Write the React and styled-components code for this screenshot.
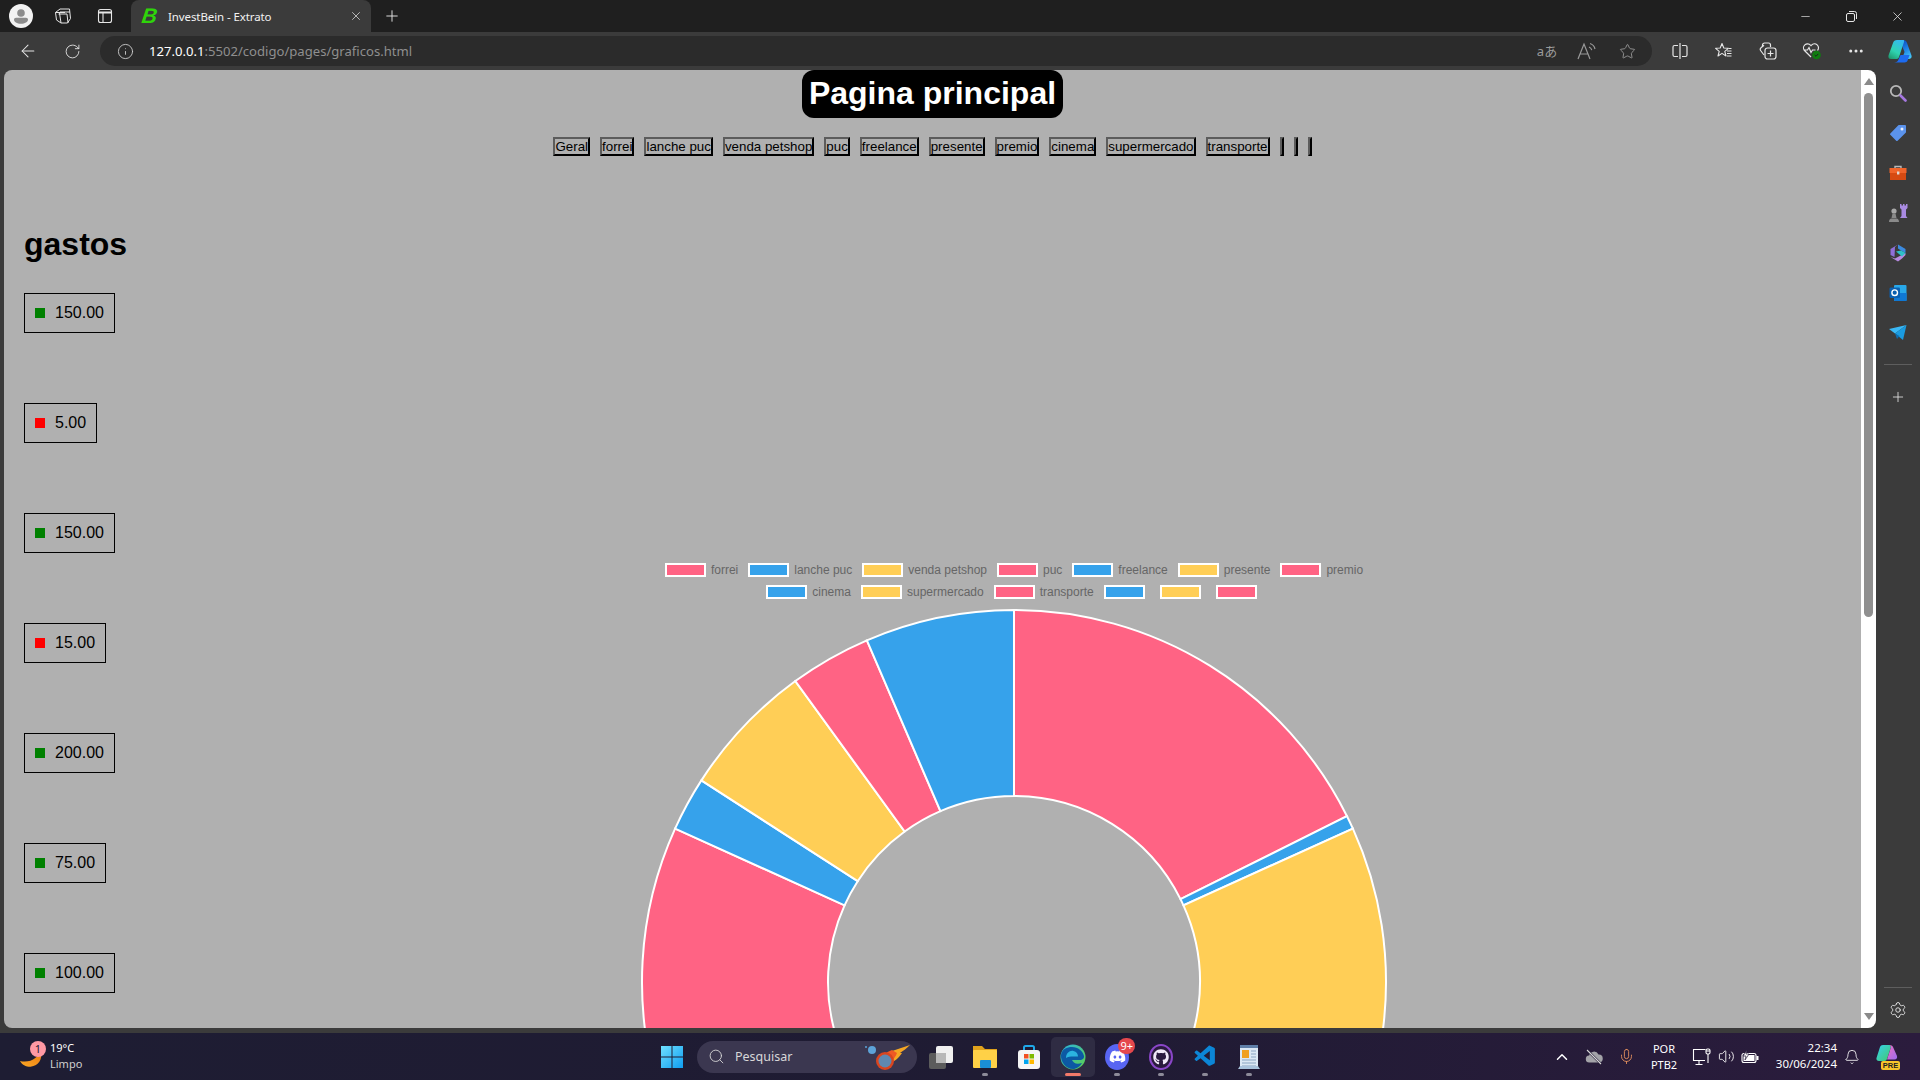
import React from "react";
import styled, { createGlobalStyle } from "styled-components";
import {
  ArrowLeft, RotateCw, Info, X, Plus, Minus, Star, Search, ChevronUp, Mic, Volume2, Bell,
  Settings, MoreHorizontal,
} from "lucide-react";
import { FaDiscord, FaGithub } from "react-icons/fa";
import { VscVscode } from "react-icons/vsc";

const GlobalStyle = createGlobalStyle`
  html, body { margin: 0; padding: 0; background: #1f1f1f; overflow: hidden; }
  * { box-sizing: border-box; }
`;

const UI_FONT = `"Noto Sans", "Open Sans", sans-serif`;
const PAGE_FONT = `"Liberation Sans", Arial, sans-serif`;
const PALETTE = ["#ff6384", "#36a2eb", "#ffce56"];

const Window = styled.div`
  width: 1920px;
  height: 1080px;
  display: flex;
  flex-direction: column;
  background: #3b3b3b;
  overflow: hidden;
  font-family: ${UI_FONT};
`;

/* ---------- browser chrome ---------- */
const TabStrip = styled.div`
  height: 32px;
  flex: none;
  display: flex;
  background: #1f1f1f;
  color: #fff;
`;

const Slot = styled.div`
  width: ${(p) => p.$w || 44}px;
  height: ${(p) => p.$h || 32}px;
  flex: none;
  display: flex;
  align-items: center;
  justify-content: center;
  color: ${(p) => p.$color || "#e6e6e6"};
`;

const Tab = styled.div`
  width: 240px;
  margin-left: 5px;
  display: flex;
  align-items: center;
  background: #3b3b3b;
  border-radius: 8px 8px 0 0;
  padding: 0 8px 0 11px;
`;

const Favicon = styled.span`
  width: 26px;
  font: italic 700 21px "Liberation Sans", sans-serif;
  color: #2fd40a;
  transform: skewX(-8deg);
`;

const TabTitle = styled.span`
  flex: 1;
  font-size: 11.5px;
  letter-spacing: -0.1px;
  color: #f2f2f2;
`;

const WindowControls = styled.div`
  margin-left: auto;
  display: flex;
`;

const Toolbar = styled.div`
  height: 38px;
  flex: none;
  display: flex;
  align-items: center;
  padding-left: 6px;
  background: #3b3b3b;
`;

const AddressBar = styled.div`
  width: 1552px;
  height: 30px;
  margin-left: 6px;
  margin-right: 6px;
  padding: 0 5px 0 17px;
  flex: none;
  display: flex;
  align-items: center;
  border-radius: 15px;
  background: #2b2b2b;
  color: #cfcfcf;
`;

const Url = styled.span`
  margin-left: 15px;
  font-size: 13.1px;
  color: #8f8f8f;
  b { font-weight: 400; color: #fff; }
`;

const AddressActions = styled.div`
  margin-left: auto;
  display: flex;
  color: #9a9a9a;
`;

const TranslateGlyph = styled.span`
  margin-top: -2px;
  font: 13px "Noto Sans", "Noto Sans CJK JP", sans-serif;
  color: #9a9a9a;
`;

/* ---------- page ---------- */
const Body = styled.div`
  height: 958px;
  flex: none;
  display: flex;
  padding-left: 4px;
`;

const Page = styled.main`
  width: 1857px;
  height: 958px;
  flex: none;
  overflow: hidden;
  background: #b0b0b0;
  border-radius: 8px 0 0 8px;
  font-family: ${PAGE_FONT};
  color: #000;
`;

const Header = styled.header`
  display: flex;
  flex-direction: column;
  align-items: center;
`;

const Title = styled.h1`
  margin: 0;
  padding: 5px 7px 6px;
  font-size: 32px;
  line-height: 37px;
  font-weight: 700;
  color: #fff;
  background: #000;
  border-radius: 12px;
`;

const Filters = styled.nav`
  margin-top: 19px;
  display: flex;
  gap: 10px;
`;

const FilterButton = styled.button`
  height: 19px;
  min-width: 4px;
  padding: 0;
  font: 13.333px ${PAGE_FONT};
  line-height: 15px;
  color: #000;
  background: transparent;
  border-style: solid;
  border-width: 2px;
  border-color: #5c5c5c #000 #000 #5c5c5c;
`;

const Main = styled.div`
  display: flex;
  margin-top: 70px;
`;

const Expenses = styled.section`
  width: 500px;
  flex: none;
  padding-left: 20px;
`;

const ExpensesTitle = styled.h2`
  margin: 0 0 30px;
  font-size: 32px;
  line-height: 37px;
  font-weight: 700;
`;

const ExpenseList = styled.ul`
  margin: 0;
  padding: 0;
  list-style: none;
  display: flex;
  flex-direction: column;
  gap: 70px;
`;

const Expense = styled.li`
  width: fit-content;
  height: 40px;
  padding: 0 10px;
  display: flex;
  align-items: center;
  gap: 10px;
  border: 1px solid #000;
  font-size: 16px;
`;

const Dot = styled.span`
  width: 10px;
  height: 10px;
  background: ${(p) => (p.$kind === "in" ? "#008000" : "#ff0000")};
`;

const ChartArea = styled.section`
  width: 1020px;
  flex: none;
  padding-top: 337px;
  display: flex;
  flex-direction: column;
  align-items: center;
`;

const Legend = styled.div`
  display: flex;
  flex-direction: column;
  align-items: center;
  gap: 8px;
`;

const LegendRow = styled.div`
  height: 14px;
  display: flex;
  margin-right: -10px;
`;

const LegendItem = styled.div`
  display: flex;
  align-items: center;
  gap: 5px;
  margin-right: 10px;
  font-size: 12px;
  color: #666;
`;

const Swatch = styled.span`
  width: 41px;
  height: 14px;
  border: 2px solid #fff;
  background: ${(p) => p.$color};
`;

const Donut = styled.svg`
  display: block;
  flex: none;
  margin-top: 9px;
`;

const Scrollbar = styled.div`
  width: 15px;
  height: 958px;
  flex: none;
  display: flex;
  flex-direction: column;
  align-items: center;
  background: #fff;
  border-radius: 0 8px 8px 0;
`;

const Arrow = styled.span`
  width: 0;
  height: 0;
  border-left: 5px solid transparent;
  border-right: 5px solid transparent;
  ${(p) => (p.$up ? "border-bottom" : "border-top")}: 7px solid #8a8a8a;
  margin: ${(p) => (p.$up ? "8px 0 0" : "auto 0 8px")};
`;

const Thumb = styled.span`
  width: 9px;
  height: 524px;
  margin-top: 8px;
  border-radius: 5px;
  background: #8f8f8f;
`;

const SideRail = styled.aside`
  width: 44px;
  flex: none;
  padding-top: 3px;
  display: flex;
  flex-direction: column;
  align-items: center;
  background: #3b3b3b;
`;

const RailDivider = styled.hr`
  width: 28px;
  height: 1px;
  margin: ${(p) => (p.$bottom ? "auto 0 4px" : "11px 0 12px")};
  border: 0;
  background: #5e5e5e;
`;

const Gutter = styled.div`
  height: 5px;
  flex: none;
  background: #3b3b3b;
`;

/* ---------- taskbar ---------- */
const Taskbar = styled.footer`
  height: 47px;
  flex: none;
  display: flex;
  align-items: center;
  color: #fff;
  background: linear-gradient(90deg, #1e1d33 0%, #1f1b33 55%, #2b1c3d 100%);
`;

const Weather = styled.div`
  width: 650px;
  flex: none;
  padding-left: 20px;
  display: flex;
  align-items: center;
  gap: 8px;
`;

const WeatherIcon = styled.div`
  position: relative;
  width: 22px;
  height: 32px;
  padding-top: 6px;
  display: flex;
  align-items: center;
`;

const CountBadge = styled.span`
  position: absolute;
  top: ${(p) => p.$top}px;
  right: ${(p) => p.$right}px;
  height: 16px;
  min-width: 16px;
  padding: 0 2px;
  border-radius: 8px;
  font-size: 11px;
  line-height: 16px;
  text-align: center;
  color: ${(p) => p.$color};
  background: ${(p) => p.$bg};
`;

const TwoLines = styled.div`
  display: flex;
  flex-direction: column;
  align-items: ${(p) => p.$align || "flex-start"};
  width: ${(p) => (p.$w ? `${p.$w}px` : "auto")};
  margin-top: ${(p) => p.$lift || 0}px;
  flex: none;
  font-size: ${(p) => p.$size || 11}px;
  line-height: 16px;
  span + span { color: ${(p) => p.$second || "#fff"}; }
`;

const SearchPill = styled.div`
  width: 220px;
  height: 32px;
  margin: 0 2px 0 3px;
  padding: 0 7px 0 11px;
  flex: none;
  display: flex;
  align-items: center;
  gap: 10px;
  border-radius: 16px;
  background: #3b3750;
  font-size: 12.5px;
  color: #d8d8d8;
`;

const PillArt = styled.span`
  margin-left: auto;
  display: flex;
`;

const AppSlot = styled.div`
  position: relative;
  width: 44px;
  height: 40px;
  flex: none;
  display: flex;
  align-items: center;
  justify-content: center;
  border-radius: 5px;
  background: ${(p) => (p.$active ? "#2f2c43" : "transparent")};
  &::after {
    content: "";
    position: absolute;
    bottom: 1px;
    left: 50%;
    width: ${(p) => (p.$active ? 16 : 6)}px;
    height: 3px;
    border-radius: 2px;
    transform: translateX(-50%);
    background: ${(p) => (p.$active ? "#f47a6a" : p.$running ? "#8d8b99" : "transparent")};
  }
`;

const AppCircle = styled.span`
  width: 24px;
  height: 26px;
  border-radius: 50%;
  display: flex;
  align-items: center;
  justify-content: center;
  background: ${(p) => p.$bg};
  border: ${(p) => (p.$ring ? `2px solid ${p.$ring}` : "0")};
`;

const Tray = styled.div`
  margin-left: auto;
  padding-right: 11px;
  display: flex;
  align-items: center;
`;

const TrayGroup = styled.div`
  margin-left: 4px;
  display: flex;
`;

const PreMark = styled.div`
  position: relative;
  width: 24px;
  height: 26px;
`;

const PreBadge = styled.span`
  position: absolute;
  right: 0;
  bottom: 0;
  width: 19px;
  height: 9px;
  border-radius: 2px;
  background: #f7c52b;
  color: #222;
  font: 700 7.5px/9px "Liberation Sans", sans-serif;
  text-align: center;
`;

/* ---------- drawings ---------- */
const Profile = () => (
  <svg width="24" height="24" viewBox="0 0 24 24">
    <circle cx="12" cy="12" r="12" fill="#f2f2f2" />
    <circle cx="12" cy="9" r="3.8" fill="#8c8c8c" />
    <path d="M5 15.5c0-1 1-1.8 2-1.8h10c1 0 2 .8 2 1.8 0 2.6-3 4.3-7 4.3s-7-1.7-7-4.3z" fill="#8c8c8c" />
  </svg>
);

const Workspaces = () => (
  <svg width="18" height="18" viewBox="0 0 18 18" fill="none" stroke="#e6e6e6" strokeWidth="1">
    <path d="M1.5 5.5 6 2h9.5l1 9.500-3 4.500H7L2.500 13z" />
    <path d="M6 5h10M4.500 7h8.500l1 9M1.500 5.500H11M7 16 5.500 6" />
  </svg>
);

const VerticalTabs = () => (
  <svg width="16" height="16" viewBox="0 0 16 16" fill="none" stroke="#e6e6e6" strokeWidth="1.1">
    <rect x="1.5" y="1.5" width="13" height="13" rx="2" />
    <path d="M1.5 4.5h13" strokeWidth="2" />
    <path d="M6 4.5v10" />
  </svg>
);

const Restore = () => (
  <svg width="11" height="11" viewBox="0 0 11 11" fill="none" stroke="#e6e6e6">
    <rect x=".5" y="2.5" width="8" height="8" rx="1.5" />
    <path d="M3 .5h5.5a2 2 0 0 1 2 2V8" />
  </svg>
);

const ReadAloud = () => (
  <svg width="20" height="18" viewBox="0 0 20 18" fill="none" stroke="#9a9a9a" strokeWidth="1.2">
    <path d="M1 17 7 2l6 15M3 12h8" />
    <path d="M12 5c1.5.6 2.4 1.7 2.8 3.2M13 1.5c2.6.8 4.4 2.8 5 5.5" />
  </svg>
);

const SplitScreen = () => (
  <svg width="16" height="16" viewBox="0 0 16 16" fill="none" stroke="#e6e6e6" strokeWidth="1.2">
    <path d="M6 2.500H2.500A1.500 1.500 0 0 0 1 4v8a1.500 1.500 0 0 0 1.500 1.500H6" />
    <path d="M10 2.500h3.500A1.500 1.500 0 0 1 15 4v8a1.500 1.500 0 0 1-1.500 1.500H10" />
    <path d="M8 0v16" />
  </svg>
);

const Favorites = () => (
  <svg width="18" height="18" viewBox="0 0 18 18" fill="none" stroke="#e6e6e6" strokeWidth="1.1" strokeLinejoin="round">
    <path d="M7 1.500 8.800 6l4.600.3-3.600 3 1.200 4.700L7 11.400 3 14l1.200-4.700-3.600-3L5.200 6z" />
    <path d="M12 9h4.500M12 11.500h4.500M12 14h4.500M14 6.500h2.500" />
  </svg>
);

const Collections = () => (
  <svg width="18" height="18" viewBox="0 0 18 18" fill="none" stroke="#e6e6e6" strokeWidth="1.2">
    <path d="M5 13 1.600 8.500a2 2 0 0 1 .4-2.800L5 3.300" />
    <path d="M3.500 5V3a2 2 0 0 1 2-2h4a2 2 0 0 1 2 2v2" />
    <rect x="6" y="6" width="11" height="11" rx="2.5" />
    <path d="M11.500 8.500v6M8.500 11.500h6" />
  </svg>
);

const Health = () => (
  <svg width="20" height="18" viewBox="0 0 20 18">
    <path d="M9 15 2.500 8.500a4 4 0 0 1 6-5.300L9 3.700l.5-.5a4 4 0 0 1 6 5.300M1.500 8h4L7 5.500l2 5L10.500 8h3" fill="none" stroke="#e6e6e6" strokeWidth="1.2" />
    <circle cx="14.5" cy="13" r="4.3" fill="#107c10" />
    <path d="m12.700 13 1.300 1.300 2.200-2.400" fill="none" stroke="#1f1f1f" strokeWidth="1" />
  </svg>
);

const CopilotMark = () => (
  <svg width="25" height="24" viewBox="0 0 25 24">
    <defs>
      <linearGradient id="cpA" x1="0.7" y1="0" x2="0.2" y2="1">
        <stop offset="0" stopColor="#35b8f0" />
        <stop offset="0.6" stopColor="#2fd3b0" />
        <stop offset="1" stopColor="#1f9c72" />
      </linearGradient>
      <linearGradient id="cpB" x1="0.3" y1="0" x2="0.7" y2="1">
        <stop offset="0" stopColor="#0f4fc0" />
        <stop offset="0.5" stopColor="#1f86e8" />
        <stop offset="1" stopColor="#45c6f7" />
      </linearGradient>
    </defs>
    <path d="M15 1c2 0 3.500 1 4 3l4.500 12.500c.7 2-.8 3.500-2.800 3.500H14l2.500-7L13 4z" fill="url(#cpB)" />
    <path d="M9 1h6c1 0 1.500.5 1 2l-5 15c-.5 1.500-1.500 2-3 2H3c-2 0-3-1.500-2.500-3.500L5 4c.5-2 2-3 4-3z" fill="url(#cpA)" />
    <path d="M6 23.500h10.500c1.500 0 2.700-.8 3.200-2.200L21.500 16H12.500l-2 4.500c-.6 1.700-2.200 3-4.500 3z" fill="#1d6bf0" />
  </svg>
);

const RailSearch = () => (
  <svg width="18" height="18" viewBox="0 0 18 18" fill="none">
    <circle cx="7" cy="7" r="5.2" stroke="#b9b9b9" strokeWidth="1.8" />
    <path d="m11.500 11.500 5 5" stroke="#a678e0" strokeWidth="2.6" strokeLinecap="round" />
  </svg>
);

const RailTag = () => (
  <svg width="18" height="18" viewBox="0 0 18 18">
    <path d="M10 1h6a1 1 0 0 1 1 1v6a1 1 0 0 1-.3.700L8.600 16.700a1 1 0 0 1-1.400 0l-5.900-5.900a1 1 0 0 1 0-1.400L9.300 1.300A1 1 0 0 1 10 1z" fill="#5b93ec" />
    <circle cx="13" cy="5" r="1.5" fill="#e8eefc" />
  </svg>
);

const RailToolbox = () => (
  <svg width="18" height="18" viewBox="0 0 18 18">
    <path d="M6 4V2.500h6V4" fill="none" stroke="#b9b9b9" strokeWidth="1.4" />
    <rect x="0.5" y="4" width="17" height="5" fill="#f0642a" />
    <rect x="1" y="9" width="16" height="7" fill="#d64a12" />
    <rect x="8" y="7.5" width="2.4" height="3" fill="#e0d6d0" />
  </svg>
);

const RailChess = () => (
  <svg width="20" height="20" viewBox="0 0 20 20">
    <path d="M12 1h1.500v1.500H15V1h1.500v1.500H18V1h1.500v4L18 6.500V13l1.500 2H12l1.500-2V6.500L12 5z" fill="#a98be2" />
    <circle cx="6" cy="8" r="2.6" fill="#a8a8a8" />
    <path d="M4.500 10.500h3L8.500 15h-5zM1 19c0-2 1-3.500 2.500-3.500h5C10 15.500 11 17 11 19z" fill="#8a8a8a" />
  </svg>
);

const RailM365 = () => (
  <svg width="18" height="18" viewBox="0 0 18 18">
    <path d="M9 .5 16.500 5v4L12 6.500 9 4.500z" fill="#3b8be0" />
    <path d="M1.500 5 9 .5 6 3 5.500 13 1.500 11z" fill="#8f6fd8" />
    <path d="M16.500 9v2L13 14.500l-4 3-7.500-4.500 4.500 1.500z" fill="#b88ae0" />
    <path d="M7 7.500 12 6.500l4.500 2.500-3.500 3.500z" fill="#2fc0c8" />
  </svg>
);

const RailOutlook = () => (
  <svg width="18" height="18" viewBox="0 0 18 18">
    <rect x="5" y="1" width="12.5" height="16" rx="1" fill="#28a8ea" />
    <path d="M5 9h12.500v8H6a1 1 0 0 1-1-1z" fill="#0f78d4" />
    <rect x="0.5" y="3.5" width="10.5" height="10.5" rx="1.2" fill="#0a5fb0" />
    <circle cx="5.7" cy="8.7" r="2.8" fill="none" stroke="#fff" strokeWidth="1.4" />
  </svg>
);

const RailSend = () => (
  <svg width="18" height="16" viewBox="0 0 18 16">
    <path d="M0 4 17.500 0 6 8.500z" fill="#3ab8f5" />
    <path d="M17.500 0 14 15 6 8.500z" fill="#1a9be0" />
    <path d="M6 8.500 8 14l2.500-3z" fill="#0d6db0" />
  </svg>
);

const WindowsLogo = () => (
  <svg width="24" height="24" viewBox="0 0 24 24">
    <defs>
      <linearGradient id="winA" x1="0" y1="0" x2="1" y2="1">
        <stop offset="0" stopColor="#6fe0ff" />
        <stop offset="1" stopColor="#0f9df0" />
      </linearGradient>
    </defs>
    <path d="M1 1h10.500v10.500H1zM12.500 1H23v10.500H12.500zM1 12.500h10.500V23H1zM12.500 12.500H23V23H12.500z" fill="url(#winA)" />
  </svg>
);

const Comet = () => (
  <svg width="46" height="26" viewBox="0 0 46 26">
    <path d="M46 1 31 6c-4 1-8 3-11 5l8 7c4-1 8-6 10-9h-2c3-2 7-5 10-8z" fill="#f5a623" />
    <path d="M28 6c-3 1-7 3-9 6l7 6c3-2 6-6 7-9z" fill="#ef5a24" />
    <circle cx="21" cy="17" r="9" fill="#d9451f" />
    <circle cx="21" cy="17" r="6.5" fill="#5f88b0" />
    <circle cx="8" cy="6" r="4" fill="#5da3d8" />
    <circle cx="2" cy="3" r="1" fill="#5da3d8" />
  </svg>
);

const TaskView = () => (
  <svg width="26" height="26" viewBox="0 0 26 26">
    <rect x="8" y="2" width="17" height="17" rx="2" fill="#f0f0f0" />
    <rect x="1" y="9" width="17" height="16" rx="2" fill="#5c5c5c" />
    <rect x="8" y="9" width="10" height="10" fill="#b8b8b8" />
  </svg>
);

const Explorer = () => (
  <svg width="26" height="26" viewBox="0 0 26 26">
    <path d="M1 2h9l3 3h12v3H1z" fill="#e0a21c" />
    <rect x="1" y="6" width="24" height="18" rx="1" fill="#ffd147" />
    <rect x="8" y="16" width="11" height="8" rx="1" fill="#1a8fd6" />
  </svg>
);

const Store = () => (
  <svg width="24" height="26" viewBox="0 0 24 26">
    <path d="M7 7V3.500A1.500 1.500 0 0 1 8.500 2h7A1.500 1.500 0 0 1 17 3.500V7" fill="none" stroke="#1fa8e8" strokeWidth="2" />
    <rect x="1" y="6" width="22" height="19" rx="3" fill="#f5f5f5" />
    <rect x="7" y="10" width="4.5" height="4.5" fill="#f25022" />
    <rect x="12.5" y="10" width="4.5" height="4.5" fill="#7fba00" />
    <rect x="7" y="15.5" width="4.5" height="4.5" fill="#00a4ef" />
    <rect x="12.5" y="15.5" width="4.5" height="4.5" fill="#ffb900" />
  </svg>
);

const Edge = () => (
  <svg width="26" height="26" viewBox="0 0 26 26">
    <defs>
      <linearGradient id="edgeA" x1="0" y1="0" x2="1" y2="1">
        <stop offset="0" stopColor="#2bb3e0" />
        <stop offset="1" stopColor="#5fd24a" />
      </linearGradient>
    </defs>
    <circle cx="13" cy="13" r="12.5" fill="url(#edgeA)" />
    <path d="M1 11C2 5 7 3 12 3c6 0 11 4 12 9 .3 2-1 4-4.500 4H12c1 2.500 4 5 10 3-2 3.500-5.500 6-9 6C6 25 .5 18 1 11z" fill="#0c59a4" />
    <path d="M6 14c0-5 4-8 7.500-7 3 .8 4.500 3 4.500 5.500H11c-2 0-4 1-5 1.500z" fill="#2bb3e0" />
  </svg>
);

const Notepad = () => (
  <svg width="24" height="26" viewBox="0 0 24 26">
    <rect x="3" y="1" width="18" height="24" fill="#dbe8f4" />
    <rect x="3" y="1" width="18" height="3" fill="#5f7fa8" />
    <rect x="5" y="6" width="7" height="8" fill="#f0a020" />
    <path d="M14 7h5M14 10h5M14 13h5M5 16h14M5 19h14M5 22h14" stroke="#8aa5c2" strokeWidth="1" />
    <path d="M1 25h22l-2-3H3z" fill="#a9c3dc" />
  </svg>
);

const Moon = () => (
  <svg width="23" height="14" viewBox="0 0 23 14">
    <defs>
      <linearGradient id="moonA" x1="0" y1="1" x2="1" y2="0">
        <stop offset="0" stopColor="#f9a825" />
        <stop offset="1" stopColor="#ee7d12" />
      </linearGradient>
    </defs>
    <path d="M0 8c5 1.500 12 .5 16-3 1.500-1.300 3-2.500 6-5 1 6-2 13-11 14C6 14 2 12 0 8z" fill="url(#moonA)" />
  </svg>
);

const CloudMuted = () => (
  <svg width="18" height="16" viewBox="0 0 18 16">
    <path d="M4.500 13.500a3.500 3.500 0 0 1-.4-7 5 5 0 0 1 9.400-1 3.800 3.800 0 0 1 .5 8z" fill="#a3a3a8" />
    <path d="M2 1l14 14" stroke="#241b38" strokeWidth="2.4" />
    <path d="M2 1l14 14" stroke="#d8d8d8" strokeWidth="1.1" />
  </svg>
);

const Monitor = () => (
  <svg width="20" height="18" viewBox="0 0 20 18" fill="none" stroke="#fff" strokeWidth="1.1">
    <path d="M13 12.500H1.500v-11h12M7 12.500V16M3.500 16.500h7" />
    <rect x="14" y="1" width="4" height="5" rx="1.5" />
    <path d="M16 6v9M14 3h4" />
  </svg>
);

const Battery = () => (
  <svg width="18" height="14" viewBox="0 0 18 14">
    <rect x="1" y="3.5" width="14" height="9" rx="2" fill="none" stroke="#fff" strokeWidth="1.1" />
    <rect x="2.5" y="5" width="11" height="6" fill="#fff" />
    <rect x="15.5" y="6" width="2" height="4" fill="#fff" />
    <path d="M6 0 2 6h3l-1 4 4-6H5z" fill="#fff" stroke="#241b38" strokeWidth=".7" />
  </svg>
);

const TrayCopilot = () => (
  <PreMark>
    <svg width="24" height="20" viewBox="0 0 24 20">
      <defs>
        <linearGradient id="trayA" x1="0" y1="0" x2="1" y2="1">
          <stop offset="0" stopColor="#36d1f0" />
          <stop offset="1" stopColor="#42c96b" />
        </linearGradient>
        <linearGradient id="trayB" x1="0" y1="0" x2="1" y2="1">
          <stop offset="0" stopColor="#f06fc0" />
          <stop offset="1" stopColor="#9a6cf0" />
        </linearGradient>
      </defs>
      <path d="M7 1h6c1 0 1.500.5 2 2l-4 12c-.5 1-1 2-2.500 2H3c-2 0-3-1.500-2.500-3L4 3c.4-1.200 1.500-2 3-2z" fill="url(#trayA)" />
      <path d="M14 1c1.500 0 2.500 1 3 2l4 9c.5 2-.5 3.500-2.500 3.500H11L15 3z" fill="url(#trayB)" />
    </svg>
    <PreBadge>PRE</PreBadge>
  </PreMark>
);

/* ---------- data ---------- */
const FILTERS = [
  "Geral", "forrei", "lanche puc", "venda petshop", "puc", "freelance", "presente",
  "premio", "cinema", "supermercado", "transporte", "", "", "",
];

const EXPENSES = [
  { value: "150.00", kind: "in" },
  { value: "5.00", kind: "out" },
  { value: "150.00", kind: "in" },
  { value: "15.00", kind: "out" },
  { value: "200.00", kind: "in" },
  { value: "75.00", kind: "in" },
  { value: "100.00", kind: "in" },
];

const LEGEND_ROWS = [
  ["forrei", "lanche puc", "venda petshop", "puc", "freelance", "presente", "premio"],
  ["cinema", "supermercado", "transporte", "", "", ""],
];

const SLICES = [150, 5, 150, 15, 200, 75, 100, 20, 50, 30, 55];

const SIZE = 748;
const CENTER = SIZE / 2;
const OUTER = 372;
const INNER = 186;

const point = (radius, angle) => {
  const x = CENTER + radius * Math.sin(angle);
  const y = CENTER - radius * Math.cos(angle);
  return `${x.toFixed(2)} ${y.toFixed(2)}`;
};

const slicePath = (from, to) => {
  const large = to - from > Math.PI ? 1 : 0;
  return [
    `M${point(OUTER, from)}`,
    `A${OUTER} ${OUTER} 0 ${large} 1 ${point(OUTER, to)}`,
    `L${point(INNER, to)}`,
    `A${INNER} ${INNER} 0 ${large} 0 ${point(INNER, from)}`,
    "Z",
  ].join(" ");
};

const total = SLICES.reduce((sum, v) => sum + v, 0);
let running = 0;
const ARCS = SLICES.map((value, i) => {
  const from = (running / total) * Math.PI * 2;
  running += value;
  const to = (running / total) * Math.PI * 2;
  return { d: slicePath(from, to), color: PALETTE[i % 3] };
});

const stroke = { strokeWidth: 1.25 };

const App = () => {
  let legendIndex = 0;
  return (
    <Window>
      <GlobalStyle />
      <TabStrip>
        <Slot $w={42}><Profile /></Slot>
        <Slot $w={41}><Workspaces /></Slot>
        <Slot $w={43}><VerticalTabs /></Slot>
        <Tab>
          <Favicon>B</Favicon>
          <TabTitle>InvestBein - Extrato</TabTitle>
          <X size={14} color="#e6e6e6" {...stroke} />
        </Tab>
        <Slot $w={42}><Plus size={18} {...stroke} /></Slot>
        <WindowControls>
          <Slot $w={46}><Minus size={13} {...stroke} /></Slot>
          <Slot $w={46}><Restore /></Slot>
          <Slot $w={46}><X size={15} {...stroke} /></Slot>
        </WindowControls>
      </TabStrip>

      <Toolbar>
        <Slot $h={38}><ArrowLeft size={20} {...stroke} /></Slot>
        <Slot $h={38}><RotateCw size={17} {...stroke} /></Slot>
        <AddressBar>
          <Info size={17} {...stroke} />
          <Url><b>127.0.0.1</b>:5502/codigo/pages/graficos.html</Url>
          <AddressActions>
            <Slot $w={40} $h={30}><TranslateGlyph>aあ</TranslateGlyph></Slot>
            <Slot $w={40} $h={30}><ReadAloud /></Slot>
            <Slot $w={40} $h={30} $color="#9a9a9a"><Star size={17} {...stroke} /></Slot>
          </AddressActions>
        </AddressBar>
        <Slot $h={38}><SplitScreen /></Slot>
        <Slot $h={38}><Favorites /></Slot>
        <Slot $h={38}><Collections /></Slot>
        <Slot $h={38}><Health /></Slot>
        <Slot $h={38}><MoreHorizontal size={18} /></Slot>
        <Slot $h={38}><CopilotMark /></Slot>
      </Toolbar>

      <Body>
        <Page>
          <Header>
            <Title>Pagina principal</Title>
            <Filters>
              {FILTERS.map((label, i) => (
                <FilterButton key={i}>{label}</FilterButton>
              ))}
            </Filters>
          </Header>
          <Main>
            <Expenses>
              <ExpensesTitle>gastos</ExpensesTitle>
              <ExpenseList>
                {EXPENSES.map((item, i) => (
                  <Expense key={i}>
                    <Dot $kind={item.kind} />
                    {item.value}
                  </Expense>
                ))}
              </ExpenseList>
            </Expenses>
            <ChartArea>
              <Legend>
                {LEGEND_ROWS.map((row, r) => (
                  <LegendRow key={r}>
                    {row.map((label, i) => (
                      <LegendItem key={i}>
                        <Swatch $color={PALETTE[legendIndex++ % 3]} />
                        <span>{label}</span>
                      </LegendItem>
                    ))}
                  </LegendRow>
                ))}
              </Legend>
              <Donut width={SIZE} height={SIZE} viewBox={`0 0 ${SIZE} ${SIZE}`}>
                {ARCS.map((arc, i) => (
                  <path key={i} d={arc.d} fill={arc.color} stroke="#fff" strokeWidth="2" />
                ))}
              </Donut>
            </ChartArea>
          </Main>
        </Page>
        <Scrollbar>
          <Arrow $up />
          <Thumb />
          <Arrow />
        </Scrollbar>
        <SideRail>
          <Slot $h={40}><RailSearch /></Slot>
          <Slot $h={40}><RailTag /></Slot>
          <Slot $h={40}><RailToolbox /></Slot>
          <Slot $h={40}><RailChess /></Slot>
          <Slot $h={40}><RailM365 /></Slot>
          <Slot $h={40}><RailOutlook /></Slot>
          <Slot $h={40}><RailSend /></Slot>
          <RailDivider />
          <Slot $h={40}><Plus size={16} {...stroke} /></Slot>
          <RailDivider $bottom />
          <Slot $h={36}><Settings size={18} {...stroke} /></Slot>
        </SideRail>
      </Body>
      <Gutter />

      <Taskbar>
        <Weather>
          <WeatherIcon>
            <Moon />
            <CountBadge $top={0} $right={-4} $bg="#ff99a4" $color="#1f1b33">1</CountBadge>
          </WeatherIcon>
          <TwoLines $second="#cfcfcf" $lift={-1}>
            <span>19°C</span>
            <span>Limpo</span>
          </TwoLines>
        </Weather>
        <AppSlot><WindowsLogo /></AppSlot>
        <SearchPill>
          <Search size={17} {...stroke} />
          Pesquisar
          <PillArt><Comet /></PillArt>
        </SearchPill>
        <AppSlot><TaskView /></AppSlot>
        <AppSlot $running><Explorer /></AppSlot>
        <AppSlot><Store /></AppSlot>
        <AppSlot $active><Edge /></AppSlot>
        <AppSlot $running>
          <AppCircle $bg="#5865f2"><FaDiscord size={17} color="#fff" /></AppCircle>
          <CountBadge $top={1} $right={4} $bg="#e5484d" $color="#fff">9+</CountBadge>
        </AppSlot>
        <AppSlot $running>
          <AppCircle $bg="#2b1a3f" $ring="#8a46c8"><FaGithub size={16} color="#f0e8f8" /></AppCircle>
        </AppSlot>
        <AppSlot $running><VscVscode size={25} color="#0c86d6" /></AppSlot>
        <AppSlot $running><Notepad /></AppSlot>
        <Tray>
          <Slot $w={32} $h={47} $color="#fff"><ChevronUp size={18} /></Slot>
          <Slot $w={32} $h={47}><CloudMuted /></Slot>
          <Slot $w={32} $h={47} $color="#e8925f"><Mic size={17} {...stroke} /></Slot>
          <TwoLines $w={44} $align="center">
            <span>POR</span>
            <span>PTB2</span>
          </TwoLines>
          <TrayGroup>
            <Slot $w={24} $h={47}><Monitor /></Slot>
            <Slot $w={24} $h={47} $color="#fff"><Volume2 size={17} {...stroke} /></Slot>
            <Slot $w={24} $h={47}><Battery /></Slot>
          </TrayGroup>
          <TwoLines $w={75} $align="flex-end" $size={11.5} $lift={-1}>
            <span>22:34</span>
            <span>30/06/2024</span>
          </TwoLines>
          <Slot $w={30} $h={47} $color="#fff"><Bell size={16} {...stroke} /></Slot>
          <Slot $w={42} $h={47}><TrayCopilot /></Slot>
        </Tray>
      </Taskbar>
    </Window>
  );
};

export default App;
